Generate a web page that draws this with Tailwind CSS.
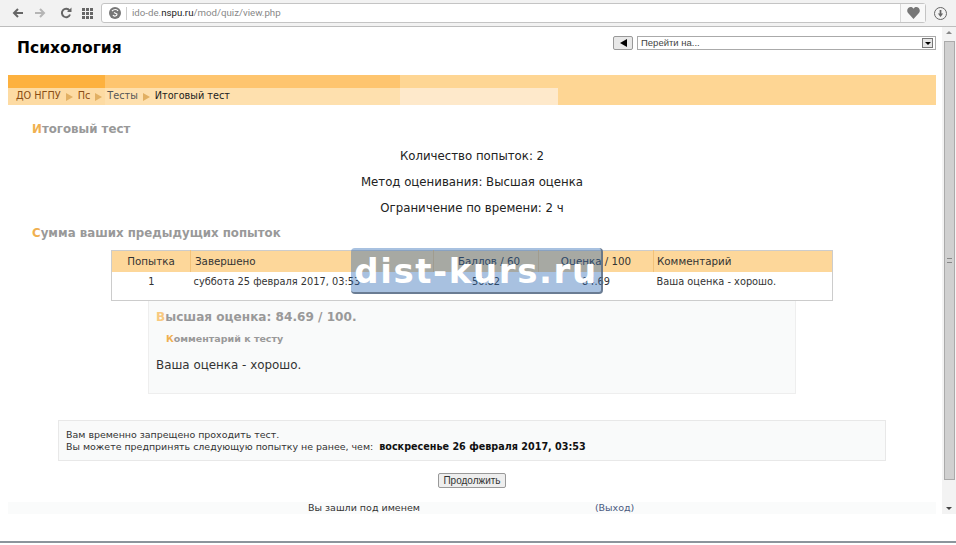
<!DOCTYPE html>
<html lang="en">
  <head>
    <meta charset="UTF-8" />
    <meta name="viewport" content="width=device-width, initial-scale=1.0" />
    <title>Психология</title>
    <script src="https://cdn.jsdelivr.net/npm/@tailwindcss/browser@4"></script>
  </head>
  <body class="h-[545px] w-[956px] overflow-hidden bg-white font-['DejaVu_Sans',sans-serif] text-[#333] relative">
    <!-- browser toolbar -->
    <div class="h-[27px] bg-[#f2f2f2] border-b border-[#bdbdbd] flex items-center pl-[12px] pr-[9px]">
      <svg class="w-3 h-3 text-[#666]" viewBox="0 0 12 12" fill="none" stroke="currentColor" stroke-width="2"><path d="M11 6H2M6 2L2 6l4 4" /></svg>
      <svg class="w-3 h-3 ml-[10px] text-[#b5b5b5]" viewBox="0 0 12 12" fill="none" stroke="currentColor" stroke-width="2"><path d="M1 6h9M6 2l4 4-4 4" /></svg>
      <svg class="w-3 h-3 ml-[14px] text-[#666]" viewBox="0 0 12 12" fill="none" stroke="currentColor" stroke-width="2"><path d="M10 7.5A4.2 4.2 0 1 1 9.5 3.5" /><path d="M11.5 .5v4.5H7" fill="currentColor" stroke="none" /></svg>
      <div class="ml-[10px] grid grid-cols-3 gap-[1px] w-[11px]">
        <i class="h-[3px] bg-[#666]"></i><i class="h-[3px] bg-[#666]"></i><i class="h-[3px] bg-[#666]"></i>
        <i class="h-[3px] bg-[#666]"></i><i class="h-[3px] bg-[#666]"></i><i class="h-[3px] bg-[#666]"></i>
        <i class="h-[3px] bg-[#666]"></i><i class="h-[3px] bg-[#666]"></i><i class="h-[3px] bg-[#666]"></i>
      </div>
      <div class="ml-[8px] flex-1 h-[20px] bg-white border border-[#c4c4c4] rounded-[3px] flex items-center">
        <svg class="w-[12px] h-[12px] ml-[7px]" viewBox="0 0 12 12"><circle cx="6" cy="6" r="6" fill="#777" /><path d="M3 4c2-2 5-2 6 0M4 8c1 2 4 1 4-1L5 5.500" fill="none" stroke="#fff" stroke-width="1.200" /></svg>
        <div class="w-px h-[13px] bg-[#ccc] ml-[5px]"></div>
        <span class="ml-[5px] text-[9.7px] font-['Roboto',sans-serif] text-[#888]">ido-de.<span class="text-[#222]">nspu.ru</span>/mod/quiz/view.php</span>
        <div class="ml-auto w-[25px] h-full border-l border-[#d8d8d8] bg-[#f8f8f8] flex items-center justify-center">
          <svg class="w-[13px] h-[12px] text-[#777]" viewBox="0 0 24 22" fill="currentColor"><path d="M12 22 2 11C-2 6 2 0 7 0c2 0 4 1 5 3 1-2 3-3 5-3 5 0 9 6 5 11Z" /></svg>
        </div>
      </div>
      <div class="ml-[8px] w-[13px] h-[13px] rounded-full border-[1.5px] border-[#666] flex items-center justify-center">
        <svg class="w-[7px] h-[7px] text-[#666]" viewBox="0 0 8 8" fill="currentColor"><path d="M3 0h2v4h2L4 8 1 4h2Z" /></svg>
      </div>
    </div>

    <div class="flex h-[487px]">
      <!-- page -->
      <div class="w-[942px] shrink-0 pl-2 pr-[6px]">
        <div class="h-[48px] flex items-start pl-[9px] relative">
          <h1 class="mt-[12px] text-[15.5px] leading-[19px] font-bold text-black">Психология</h1>
          <div class="ml-auto mt-[9px] flex items-center">
            <button class="w-[20px] h-[14px] bg-[#e8e8e8] border border-[#999] rounded-[2px] flex items-center justify-center">
              <span class="w-0 h-0 border-y-[4px] border-y-transparent border-r-[7px] border-r-black"></span>
            </button>
            <div class="ml-[4px] w-[299px] h-[14px] border border-[#aaa] flex items-center pl-[3px] pr-[2px] text-[9.5px] font-['Liberation_Sans',sans-serif] text-[#444]">
              Перейти на...
              <span class="ml-auto w-[11px] h-[10px] bg-[#e6e6e6] border border-[#777] flex items-center justify-center">
                <span class="w-0 h-0 border-x-[3px] border-x-transparent border-t-[3px] border-t-black"></span>
              </span>
            </div>
          </div>
        </div>

        <!-- navbar -->
        <div class="h-[30px] bg-[#fed694]">
          <div class="h-[13px] flex">
            <div class="w-[97px] bg-[#fdb13e]"></div>
            <div class="w-[295px] bg-[#fec56f]"></div>
          </div>
          <div class="h-[17px] flex relative">
            <div class="w-[97px] bg-[#fddba3]"></div>
            <div class="w-[295px] bg-[#fee0ae]"></div>
            <div class="w-[158px] bg-[#fee9cb]"></div>
            <!-- crumbs sit over the three colour blocks -->
            <div class="absolute inset-0 pl-2 flex items-center text-[9.7px] gap-[5px]">
              <span class="text-[#8a4d14]">ДО НГПУ</span><span class="w-0 h-0 border-y-[4px] border-y-transparent border-l-[7px] border-l-[#e2b063]"></span>
              <span class="text-[#8a4d14]">Пс</span><span class="w-0 h-0 border-y-[4px] border-y-transparent border-l-[7px] border-l-[#e2b063]"></span>
              <span class="text-[#555]">Тесты</span><span class="w-0 h-0 border-y-[4px] border-y-transparent border-l-[7px] border-l-[#e2b063]"></span>
              <span class="text-[#222]">Итоговый тест</span>
            </div>
          </div>
        </div>

        <h2 class="mt-[17px] ml-[24px] text-[11.8px] leading-[14px] font-bold text-[#999]"><span class="text-[#f0b050]">И</span>тоговый тест</h2>
        <div class="mt-[13px] text-center text-[11.75px] leading-[15px] text-[#222]">
          <p>Количество попыток: 2</p>
          <p class="mt-[11px]">Метод оценивания: Высшая оценка</p>
          <p class="mt-[11px]">Ограничение по времени: 2 ч</p>
        </div>
        <h2 class="mt-[10px] ml-[24px] text-[11.8px] leading-[14px] font-bold text-[#999]"><span class="text-[#f0b050]">С</span>умма ваших предыдущих попыток</h2>

        <!-- attempts table -->
        <table class="mt-[10px] ml-[103px] w-[722px] table-fixed border border-[#ccc] text-[9.8px] border-collapse">
          <thead class="bg-[#fdd79a] text-[#333] text-[10.3px]">
            <tr class="h-[21px]">
              <th class="w-[79px] font-normal text-center">Попытка</th>
              <th class="w-[243px] font-normal text-left pl-[4px] border-l border-[#f2c27a]">Завершено</th>
              <th class="w-[105px] font-normal text-center pl-[6px] border-l border-[#f2c27a]">Баллов / 60</th>
              <th class="w-[115px] font-normal text-center border-l border-[#f2c27a]">Оценка / 100</th>
              <th class="font-normal text-left pl-[3px] border-l border-[#f2c27a]">Комментарий</th>
            </tr>
          </thead>
          <tbody>
            <tr class="h-[29px] align-top">
              <td class="text-center pt-[3px]">1</td>
              <td class="pl-[3px] pt-[3px] whitespace-nowrap">суббота 25 февраля 2017, 03:53</td>
              <td class="text-center pt-[3px]">50.82</td>
              <td class="text-center pt-[3px]">84.69</td>
              <td class="pl-[3px] pt-[3px]">Ваша оценка - хорошо.</td>
            </tr>
          </tbody>
        </table>

        <!-- feedback box -->
        <div class="ml-[140px] w-[648px] h-[93px] bg-[#f9fafa] border border-t-0 border-[#eee] pl-[7px]">
          <h3 class="pt-[8px] text-[12.1px] leading-[16px] font-bold text-[#999]"><span class="text-[#f8c97f]">В</span>ысшая оценка: 84.69 / 100.</h3>
          <h4 class="mt-[8px] ml-[10px] text-[9.5px] leading-[12px] font-bold text-[#999]"><span class="text-[#f0b050]">К</span>омментарий к тесту</h4>
          <p class="mt-[13px] text-[11.9px] leading-[15px] text-[#333]">Ваша оценка - хорошо.</p>
        </div>

        <!-- notice -->
        <div class="mt-[26px] ml-[50px] w-[828px] h-[41px] bg-[#f9fafa] border border-[#e8e8e8] pl-[7px] pt-[8px] text-[9.45px] leading-[11.5px]">
          <p>Вам временно запрещено проходить тест.</p>
          <p>Вы можете предпринять следующую попытку не ранее, чем: <b class="ml-[3px] text-[#111] text-[9.65px]">воскресенье 26 февраля 2017, 03:53</b></p>
        </div>

        <div class="mt-[12px] flex justify-center">
          <button class="h-[15px] px-[4px] bg-[#eee] border border-[#999] rounded-[2px] text-[10px] leading-[13px] font-['Liberation_Sans',sans-serif] text-[#333]">Продолжить</button>
        </div>

        <div class="mt-[14px] h-[12px] bg-[#fafbfb] text-[9.5px] leading-[12px] flex">
          <span class="ml-[300px]">Вы зашли под именем</span>
          <span class="ml-[175px] text-[#4a5a80]">(Выход)</span>
        </div>
      </div>

      <!-- scrollbar -->
      <div class="w-[14px] flex flex-col items-center bg-[#f3f3f3] h-[487px]">
        <span class="mt-[4px] w-0 h-0 border-x-[3px] border-x-transparent border-b-[3px] border-b-[#888]"></span>
        <div class="mt-[7px] w-[11px] h-[439px] bg-[#d0d0d0] border border-[#aaa] flex items-center justify-center">
          <div class="w-[5px] h-[5px] border-y border-[#888]"></div>
        </div>
        <span class="mt-auto mb-[4px] w-0 h-0 border-x-[3px] border-x-transparent border-t-[3px] border-t-[#444]"></span>
      </div>
    </div>

    <!-- bottom edge of the window -->
    <div class="absolute left-0 right-0 top-[541px] h-[2px] bg-[#8c959c]"></div>

    <!-- watermark -->
    <div class="absolute left-[351px] top-[248px] w-[252px] h-[46px] rounded-[4px] bg-[#2564b1]/40 border-b-2 border-r-2 border-[#5b6b80]/80 text-center text-white font-bold text-[34px] tracking-[1.6px] leading-[46px] overflow-hidden">dist-kurs.ru</div>
  </body>
</html>
